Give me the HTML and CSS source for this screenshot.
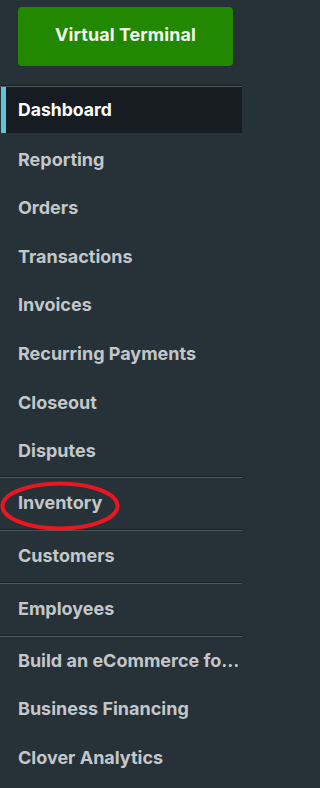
FILE: index.html
```html
<!DOCTYPE html>
<html>
<head>
<meta charset="utf-8">
<link rel="stylesheet" href="styles.css">
</head>
<body>
<nav class="sidebar">
  <div class="top">
    <button class="vt-btn">Virtual Terminal</button>
  </div>
  <ul class="group first">
    <li class="item active">Dashboard</li>
    <li class="item">Reporting</li>
    <li class="item">Orders</li>
    <li class="item">Transactions</li>
    <li class="item">Invoices</li>
    <li class="item">Recurring Payments</li>
    <li class="item">Closeout</li>
    <li class="item">Disputes</li>
  </ul>
  <ul class="group single">
    <li class="item">Inventory</li>
  </ul>
  <ul class="group single">
    <li class="item">Customers</li>
  </ul>
  <ul class="group single">
    <li class="item">Employees</li>
  </ul>
  <ul class="group last">
    <li class="item">Build an eCommerce for your business</li>
    <li class="item">Business Financing</li>
    <li class="item">Clover Analytics</li>
  </ul>
  <svg class="circle" width="242" height="788" viewBox="0 0 242 788">
    <ellipse cx="60" cy="506" rx="57.5" ry="22.5" fill="none" stroke="#ea1620" stroke-width="4"/>
  </svg>
</nav>
</body>
</html>
```
FILE: styles.css
```css
html, body {
  margin: 0;
  padding: 0;
  background: #263238;
}
.sidebar {
  position: relative;
  width: 242px;
  height: 788px;
  overflow: hidden;
  background: #263238;
  font-family: Inter, "Noto Sans", sans-serif;
  font-weight: 700;
}
.top {
  padding: 7px 9px 0 18px;
  height: 85px;
  box-sizing: border-box;
}
.vt-btn {
  display: block;
  width: 215px;
  height: 59px;
  border: none;
  border-radius: 4px;
  background: #228800;
  color: #f2f6ee;
  font-family: inherit;
  font-weight: 700;
  font-size: 17.9px;
  letter-spacing: 0.1px;
  padding: 0 0 4px 0;
}
.group {
  list-style: none;
  margin: 0;
  padding: 0;
  border-top: 1px solid #1a2026;
  box-shadow: inset 0 1px 0 #4d575c;
  padding-top: 1px;
}
.single {
  padding-top: 2.2px;
  padding-bottom: 1.2px;
}
.item {
  display: block;
  height: 48.6px;
  padding: 0 0 0 18px;
  color: #c3c7c9;
  font-size: 18px;
  white-space: nowrap;
  overflow: hidden;
  text-overflow: ellipsis;
  line-height: 47px;
}
.item.active {
  background: #171c23;
  color: #ffffff;
  font-size: 17.6px;
  border-left: 5px solid #5fc4d8;
  margin-left: 1px;
  padding-left: 12px;
  height: 45.6px;
  line-height: 45px;
  margin-bottom: 3px;
}
.circle {
  position: absolute;
  left: 0;
  top: 0;
  pointer-events: none;
}
```
